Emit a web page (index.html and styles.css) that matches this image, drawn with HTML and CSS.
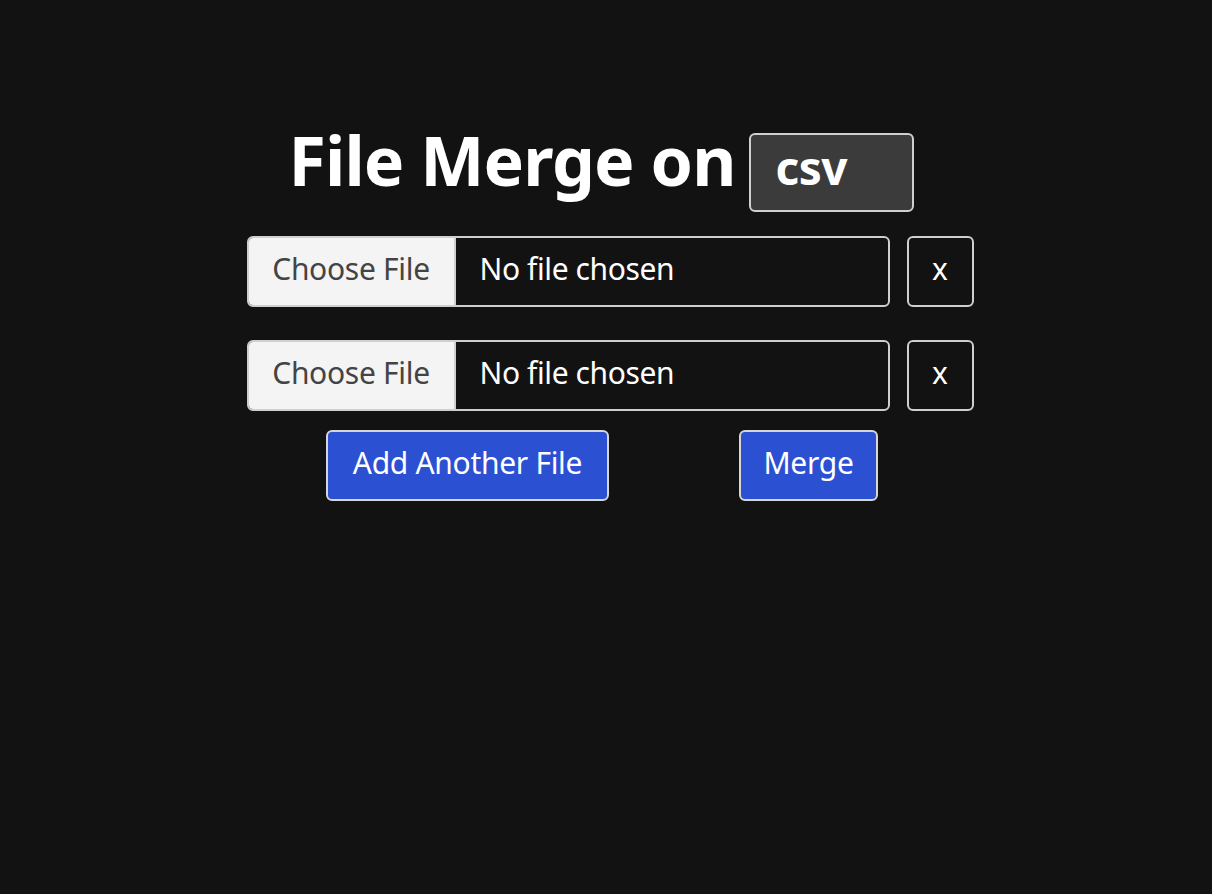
FILE: index.html
```html
<!DOCTYPE html>
<html lang="en">
<head>
<meta charset="utf-8">
<title>File Merge</title>
<link rel="stylesheet" href="styles.css">
</head>
<body>
<main class="app">
  <h1 class="title"><span class="title-text">File Merge on</span><span class="select">csv</span></h1>
  <div class="rows">
    <div class="row">
      <label class="file"><span class="file-btn">Choose File</span><span class="file-name">No file chosen</span></label>
      <button class="remove">x</button>
    </div>
    <div class="row">
      <label class="file"><span class="file-btn">Choose File</span><span class="file-name">No file chosen</span></label>
      <button class="remove">x</button>
    </div>
  </div>
  <div class="actions">
    <button class="primary add">Add Another File</button>
    <button class="primary merge">Merge</button>
  </div>
</main>
</body>
</html>
```
FILE: styles.css
```css
html, body {
  margin: 0;
  padding: 0;
  background: #121212;
  height: 100%;
}
body {
  font-family: "Noto Sans", "Open Sans", sans-serif;
  color: #fff;
}
.app {
  display: flex;
  flex-direction: column;
  align-items: center;
  padding-top: 120px;
}
.title {
  margin: 0 0 0 -9px;
  display: flex;
  align-items: flex-start;
  gap: 14px;
  font-size: 68px;
  font-weight: 700;
  line-height: 80px;
}
.title-text {
  letter-spacing: -0.9px;
}
.select {
  box-sizing: border-box;
  width: 165px;
  height: 79px;
  margin-top: 13px;
  padding-left: 24px;
  background: #3b3b3b;
  border: 2px solid #cfcfcf;
  border-radius: 6px;
  font-size: 46px;
  line-height: 64px;
  letter-spacing: -0.5px;
}
.rows {
  margin-top: 24px;
  margin-left: 8px;
  display: flex;
  flex-direction: column;
  gap: 33px;
}
.row {
  display: flex;
  gap: 17px;
}
.file {
  box-sizing: border-box;
  width: 643px;
  height: 71px;
  display: flex;
  border: 2px solid #cfcfcf;
  border-radius: 6px;
  overflow: hidden;
  background: #121212;
  font-size: 30px;
}
.file-btn {
  box-sizing: border-box;
  width: 207px;
  display: flex;
  align-items: center;
  justify-content: center;
  padding-bottom: 6px;
  background: #f4f4f4;
  color: #444;
  border-right: 2px solid #cfcfcf;
  letter-spacing: -0.3px;
}
.file-name {
  display: flex;
  align-items: center;
  padding-left: 24px;
  padding-bottom: 6px;
  color: #fff;
  letter-spacing: -0.4px;
}
.remove {
  box-sizing: border-box;
  width: 67px;
  height: 71px;
  background: #121212;
  color: #fff;
  border: 2px solid #cfcfcf;
  border-radius: 6px;
  font-family: inherit;
  font-size: 30px;
  padding: 0 0 6px;
}
.actions {
  margin-top: 19px;
  margin-left: -8px;
  display: flex;
  gap: 130px;
}
.primary {
  box-sizing: border-box;
  height: 71px;
  background: #2b50d2;
  color: #fff;
  border: 2px solid #d6d6d6;
  border-radius: 6px;
  font-family: inherit;
  font-size: 30px;
  letter-spacing: -0.3px;
  padding: 0 0 6px;
}
.add { width: 283px; }
.merge { width: 139px; }
```
